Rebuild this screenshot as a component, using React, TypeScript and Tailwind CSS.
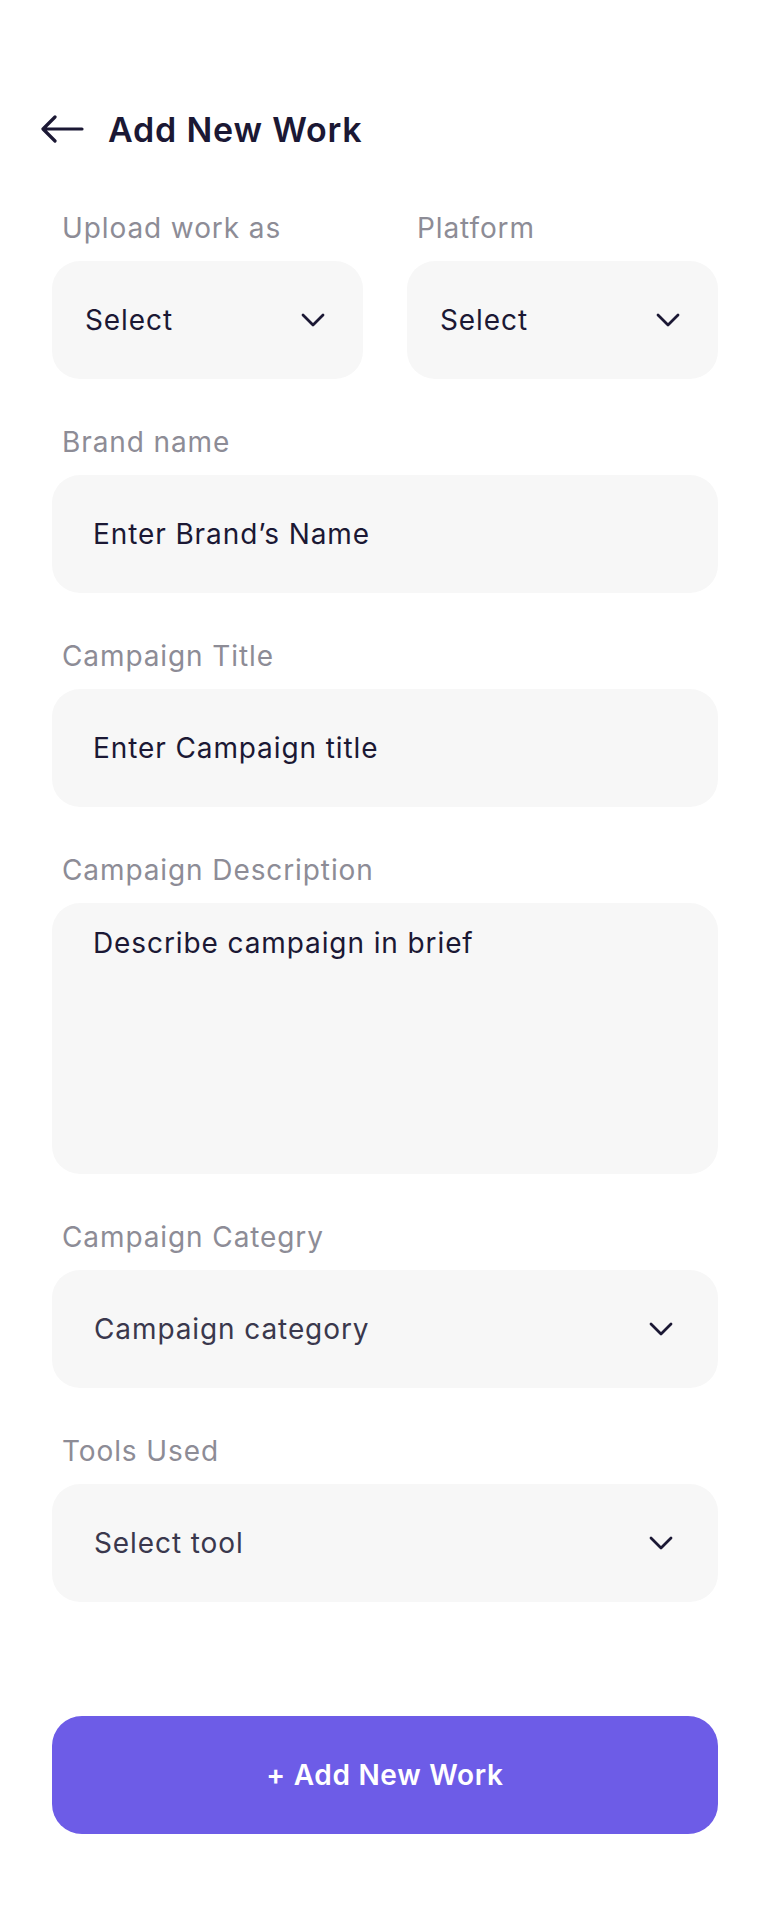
function BackArrow() {
  return (
    <svg width="44" height="28" viewBox="0 0 44 28" fill="none" className="shrink-0">
      <path
        d="M42 14H4M15 2L3 14l12 12"
        stroke="#1b1834"
        strokeWidth="3.2"
        strokeLinecap="round"
        strokeLinejoin="round"
      />
    </svg>
  );
}

function Chevron() {
  return (
    <svg width="24" height="14" viewBox="0 0 24 14" fill="none" className="shrink-0">
      <path
        d="M2 2l10 10L22 2"
        stroke="#1b1834"
        strokeWidth="2.8"
        strokeLinecap="round"
        strokeLinejoin="round"
      />
    </svg>
  );
}

function Label({ children }: { children: React.ReactNode }) {
  return (
    <label className="block h-[34px] pl-[10px] text-[28px] leading-[34px] tracking-[0.9px] text-[#8d8c96]">
      {children}
    </label>
  );
}

function SmallSelect({ label }: { label: string }) {
  return (
    <div className="flex flex-col">
      <Label>{label}</Label>
      <button className="mt-[16px] flex h-[118px] items-center justify-between rounded-[28px] bg-[#f7f7f7] pl-[33px] pr-[38px] text-[28px] tracking-[0.9px] text-[#1b1834]">
        <span>Select</span>
        <Chevron />
      </button>
    </div>
  );
}

function WideSelect({ label, placeholder }: { label: string; placeholder: string }) {
  return (
    <div className="flex flex-col">
      <Label>{label}</Label>
      <button className="mt-[16px] flex h-[118px] items-center justify-between rounded-[28px] bg-[#f7f7f7] pl-[42px] pr-[45px] text-[28px] tracking-[0.9px] text-[#3a384d]">
        <span>{placeholder}</span>
        <Chevron />
      </button>
    </div>
  );
}

function TextField({ label, placeholder }: { label: string; placeholder: string }) {
  return (
    <div className="flex flex-col">
      <Label>{label}</Label>
      <input
        placeholder={placeholder}
        className="mt-[16px] h-[118px] rounded-[28px] bg-[#f7f7f7] px-[41px] text-[28px] tracking-[0.9px] text-[#1b1834] outline-none placeholder:text-[#1b1834]"
      />
    </div>
  );
}

export default function App() {
  return (
    <div className="min-h-screen bg-white font-['Inter',sans-serif] text-[#1b1834]">
      <header className="box-content flex h-[44px] items-center gap-[24px] px-[40px] pt-[107px]">
        <BackArrow />
        <h1 className="text-[34px] font-semibold tracking-[0.8px] text-[#1b1834]">
          Add New Work
        </h1>
      </header>

      <main className="flex flex-col gap-[46px] px-[52px] pt-[60px]">
        <div className="grid grid-cols-2 gap-[44px]">
          <SmallSelect label="Upload work as" />
          <SmallSelect label="Platform" />
        </div>

        <TextField label="Brand name" placeholder="Enter Brand’s Name" />
        <TextField label="Campaign Title" placeholder="Enter Campaign title" />

        <div className="flex flex-col">
          <Label>Campaign Description</Label>
          <textarea
            placeholder="Describe campaign in brief"
            className="mt-[16px] h-[271px] resize-none rounded-[28px] bg-[#f7f7f7] px-[41px] pt-[23px] text-[28px] leading-[34px] tracking-[0.9px] text-[#1b1834] outline-none placeholder:text-[#1b1834]"
          />
        </div>

        <WideSelect label="Campaign Categry" placeholder="Campaign category" />
        <WideSelect label="Tools Used" placeholder="Select tool" />

        <button className="mt-[68px] flex h-[118px] items-center justify-center rounded-[30px] bg-[#6d5ce7] text-[28px] font-semibold tracking-[0.7px] text-white">
          + Add New Work
        </button>
      </main>
    </div>
  );
}
